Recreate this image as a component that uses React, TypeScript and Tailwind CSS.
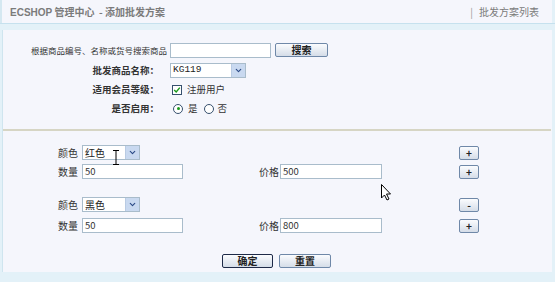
import { ChevronDown } from 'lucide-react';

const font = { fontFamily: '"Noto Sans CJK SC", "Liberation Sans", sans-serif' };

function TextBox({ value = '', width }: { value?: string; width: string }) {
    return (
        <div
            className={`${width} flex h-[15px] items-center border border-[#a9bccb] bg-white pl-[2px] text-[9.5px] leading-none text-[#333]`}
        >
            {value}
        </div>
    );
}

function SelectBox({ value, width, mono = false }: { value: string; width: string; mono?: boolean }) {
    return (
        <div
            className={`${width} flex h-[15px] items-center justify-between border border-[#a9bccb] bg-white pl-[2px] text-[10px] leading-none text-[#222]`}
        >
            <span className={mono ? 'font-["Liberation_Mono"] text-[9.5px]' : ''}>{value}</span>
            <span className="flex h-[13px] w-[14px] items-center justify-center border-l border-[#b9cbe3] bg-[#c9d9f0]">
                <ChevronDown className="size-[9px] text-[#2b4a86]" strokeWidth={3} />
            </span>
        </div>
    );
}

function Btn({ label, width, dark = false }: { label: string; width: string; dark?: boolean }) {
    return (
        <div
            className={`${width} flex h-[14px] items-center justify-center rounded-[2px] border ${
                dark ? 'border-[#1e2a48]' : 'border-[#6f88a8]'
            } bg-gradient-to-b from-[#fbfcfe] to-[#d5dde8] text-[10px] leading-none font-bold text-[#222]`}
        >
            {label}
        </div>
    );
}

function PriceRow({ qty, price }: { qty: string; price: string }) {
    return (
        <div className="flex h-[15px] items-center text-[10px] text-[#333]">
            <span className="w-[24px]">数量</span>
            <TextBox value={qty} width="w-[101px]" />
            <span className="ml-[76px] w-[21px]">价格</span>
            <TextBox value={price} width="w-[102px]" />
            <div className="ml-[77px]">
                <Btn label="+" width="w-[20px]" />
            </div>
        </div>
    );
}

export default function App() {
    return (
        <div className="relative h-[282px] w-[555px] overflow-hidden bg-[#e3f1f8]" style={font}>
            <div className="mr-[3px] flex h-[23px] items-center justify-between border-l-2 border-[#d5e8f1] bg-[#f5f6fc] pr-[13px] pl-[8px] text-[10px] text-[#7b7b7b]">
                <span className="font-bold">
                    <span className="font-['Liberation_Sans']">ECSHOP</span> 管理中心 &nbsp;- 添加批发方案
                </span>
                <span>
                    <span className="mr-[6px] text-[#999]">|</span>批发方案列表
                </span>
            </div>
            <div className="h-[7px] border-t border-[#c6e1ee]" />

            <div className="mr-[3px] ml-[2px] h-[242px] border-l border-[#cfe5ef] bg-[#f5f6fc]">
                <div className="grid grid-cols-[164px_auto] items-center gap-x-[3px] pt-[10px] text-[9.5px] text-[#333]">
                    <span className="text-right text-[8.5px]">根据商品编号、名称或货号搜索商品</span>
                    <div className="flex h-[20px] items-center gap-[4px]">
                        <TextBox width="w-[101px]" />
                        <Btn label="搜索" width="w-[53px]" />
                    </div>

                    <span className="pr-[8px] text-right font-bold">批发商品名称：</span>
                    <div className="flex h-[20px] items-center">
                        <SelectBox value="KG119" width="w-[76px]" mono />
                    </div>

                    <span className="pr-[8px] text-right font-bold">适用会员等级：</span>
                    <div className="flex h-[19px] items-center gap-[5px] pl-[2px]">
                        <span className="flex size-[10px] items-center justify-center border border-[#36506e] bg-white">
                            <svg viewBox="0 0 10 10" className="size-[8px]">
                                <path d="M1.5 5 L4 7.5 L8.5 2" fill="none" stroke="#1c9a1c" strokeWidth="1.8" />
                            </svg>
                        </span>
                        <span>注册用户</span>
                    </div>

                    <span className="pr-[8px] text-right font-bold">是否启用：</span>
                    <div className="flex h-[19px] items-center pl-[3px]">
                        <span className="flex size-[10px] items-center justify-center rounded-full border border-[#36506e] bg-white">
                            <span className="size-[3px] rounded-full bg-[#1c9a1c]" />
                        </span>
                        <span className="ml-[5px]">是</span>
                        <span className="ml-[6px] size-[10px] rounded-full border border-[#36506e] bg-white" />
                        <span className="ml-[4px]">否</span>
                    </div>
                </div>

                <div className="mt-[11px] mr-[1px] h-[2px] bg-[#d6d5c4]" />

                <div className="flex flex-col pt-[14px] pl-[55px]">
                    <div className="flex h-[15px] items-center text-[10px] text-[#333]">
                        <span className="w-[24px]">颜色</span>
                        <SelectBox value="红色" width="w-[58px]" />
                        <div className="ml-[319px]">
                            <Btn label="+" width="w-[20px]" />
                        </div>
                    </div>
                    <div className="mt-[4px]">
                        <PriceRow qty="50" price="500" />
                    </div>

                    <div className="mt-[18px] flex h-[15px] items-center text-[10px] text-[#333]">
                        <span className="w-[24px]">颜色</span>
                        <SelectBox value="黑色" width="w-[58px]" />
                        <div className="ml-[319px]">
                            <Btn label="-" width="w-[20px]" />
                        </div>
                    </div>
                    <div className="mt-[6px]">
                        <PriceRow qty="50" price="800" />
                    </div>
                </div>

                <div className="mt-[21px] flex justify-center gap-[6px] pr-[2px]">
                    <Btn label="确定" width="w-[51px]" dark />
                    <Btn label="重置" width="w-[52px]" />
                </div>
            </div>

            {/* text cursor */}
            <svg className="absolute top-[150px] left-[112px]" width="8" height="15" viewBox="0 0 8 15">
                <path d="M1 0.5 H7 M4 0.5 V14.5 M1 14.5 H7" stroke="#000" strokeWidth="1" fill="none" />
            </svg>
            {/* arrow cursor */}
            <svg className="absolute top-[184px] left-[381px]" width="11" height="17" viewBox="0 0 11 17">
                <path d="M0.5 0.5 V14 L3.5 11 L6 16 L8 15 L5.5 10 H9.5 Z" fill="#fff" stroke="#000" strokeWidth="1" />
            </svg>
        </div>
    );
}
